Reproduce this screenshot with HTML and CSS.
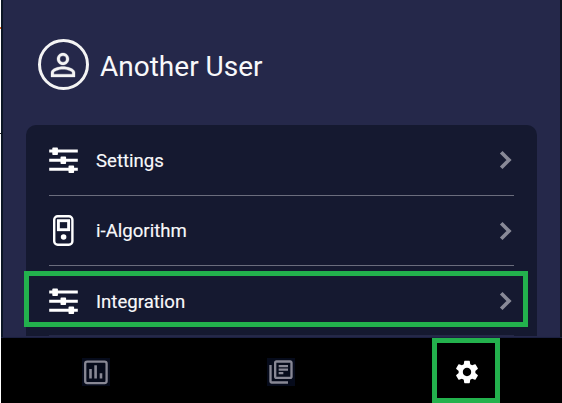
FILE: index.html
```html
<!DOCTYPE html>
<html lang="en">
<head>
<meta charset="utf-8">
<title>Settings</title>
<link rel="stylesheet" href="styles.css">
</head>
<body>
<div class="screen">
  <main class="content">
    <header class="profile">
      <span class="avatar">
        <svg width="36" height="36" viewBox="0 0 24 24" fill="#f4f4f4" stroke="#f4f4f4" stroke-width="0.2"><path d="M12 5.9a2.1 2.1 0 1 1 0 4.2 2.1 2.1 0 0 1 0-4.2m0 9c2.97 0 6.1 1.46 6.1 2.1v1.1H5.9V17c0-.64 3.13-2.1 6.1-2.1M12 4C9.79 4 8 5.79 8 8s1.79 4 4 4 4-1.79 4-4-1.79-4-4-4zm0 9c-2.67 0-8 1.34-8 4v3h16v-3c0-2.66-5.33-4-8-4z"/></svg>
      </span>
      <h1 class="name">Another User</h1>
    </header>
    <section class="card">
      <div class="row">
        <svg class="icon" width="30" height="32" viewBox="0 0 30 32"><path d="M0.2 7H28.8M0.2 16.2H28.8M0.2 25.3H28.8" stroke="#fff" stroke-width="3"/><path d="M4.1 4.2h4v6h-4zM12.3 13.2h4v6h-4zM20.3 22.3h4v6h-4z" fill="#fff" stroke="#fff" stroke-width="1.6" stroke-linejoin="round"/></svg>
        <span class="label">Settings</span>
        <svg class="chevron" width="14" height="22" viewBox="0 0 14 22"><path d="M2.2 3.2L10 11L2.2 18.8" fill="none" stroke="#888997" stroke-width="3.7"/></svg>
      </div>
      <div class="row">
        <svg class="icon" width="30" height="32" viewBox="0 0 30 32"><rect x="5.2" y="1.2" width="18.2" height="28.6" rx="3.5" fill="none" stroke="#fff" stroke-width="2.4"/><rect x="9.4" y="5.7" width="10.2" height="9" fill="none" stroke="#fff" stroke-width="2.9"/><circle cx="14.6" cy="22" r="2.8" fill="#fff"/></svg>
        <span class="label raised">i-Algorithm</span>
        <svg class="chevron" width="14" height="22" viewBox="0 0 14 22"><path d="M2.2 3.2L10 11L2.2 18.8" fill="none" stroke="#888997" stroke-width="3.7"/></svg>
      </div>
      <div class="row last">
        <svg class="icon" width="30" height="32" viewBox="0 0 30 32"><path d="M0.2 7H28.8M0.2 16.2H28.8M0.2 25.3H28.8" stroke="#fff" stroke-width="3"/><path d="M4.1 4.2h4v6h-4zM12.3 13.2h4v6h-4zM20.3 22.3h4v6h-4z" fill="#fff" stroke="#fff" stroke-width="1.6" stroke-linejoin="round"/></svg>
        <span class="label">Integration</span>
        <svg class="chevron" width="14" height="22" viewBox="0 0 14 22"><path d="M2.2 3.2L10 11L2.2 18.8" fill="none" stroke="#888997" stroke-width="3.7"/></svg>
        <span class="highlight"></span>
      </div>
    </section>
  </main>
  <nav class="tabs">
    <span class="tab"><svg class="tile" width="28" height="28" viewBox="0 0 28 28"><rect x="3.2" y="3.7" width="21.4" height="21.4" rx="2" fill="none" stroke="#888895" stroke-width="2.3"/><path d="M8.5 11v9.5M13.6 7.3v13.2M19 15.3v5.2" stroke="#888895" stroke-width="2.6"/></svg></span>
    <span class="tab"><svg class="tile" width="28" height="28" viewBox="0 0 24 24" fill="#888895"><path d="M4 6H2v14c0 1.1.9 2 2 2h14v-2H4V6zm16-4H8c-1.1 0-2 .9-2 2v12c0 1.1.9 2 2 2h12c1.1 0 2-.9 2-2V4c0-1.1-.9-2-2-2zm0 14H8V4h12v12zM10 9h8v2h-8zm0 3h4v2h-4zm0-6h8v2h-8z"/></svg></span>
    <span class="tab active"><svg width="28" height="28" viewBox="0 0 24 24" fill="#fff"><path d="M19.14 12.94c.04-.3.06-.61.06-.94 0-.32-.02-.64-.07-.94l2.03-1.58c.18-.14.23-.41.12-.61l-1.92-3.32c-.12-.22-.37-.29-.59-.22l-2.39.96c-.5-.38-1.03-.7-1.62-.94l-.36-2.54c-.04-.24-.24-.41-.48-.41h-3.84c-.24 0-.43.17-.47.41l-.36 2.54c-.59.24-1.13.57-1.62.94l-2.39-.96c-.22-.08-.47 0-.59.22L2.74 8.87c-.12.21-.08.47.12.61l2.03 1.58c-.05.3-.09.63-.09.94s.02.64.07.94l-2.03 1.58c-.18.14-.23.41-.12.61l1.92 3.32c.12.22.37.29.59.22l2.39-.96c.5.38 1.03.7 1.62.94l.36 2.54c.05.24.24.41.48.41h3.84c.24 0 .44-.17.47-.41l.36-2.54c.59-.24 1.13-.56 1.62-.94l2.39.96c.22.08.47 0 .59-.22l1.92-3.32c.12-.22.07-.47-.12-.61l-2.01-1.58zM12 15.6c-1.98 0-3.6-1.62-3.6-3.6s1.62-3.6 3.6-3.6 3.6 1.62 3.6 3.6-1.62 3.6-3.6 3.6z"/></svg></span>
  </nav>
</div>
<span class="edge-mark orange"></span>
<span class="edge-mark dark"></span>
</body>
</html>
```
FILE: styles.css
```css
* { box-sizing: border-box; }
body {
  position: relative;
  margin: 0;
  background: #fff;
  font-family: Roboto, sans-serif;
  color: #f8f8fa;
}
.screen {
  width: 562px;
  height: 403px;
  overflow: hidden;
  border-left: 1px solid #fff;
  display: flex;
  flex-direction: column;
}
.content {
  height: 337px;
  flex: none;
  padding: 39px 23px 0;
  background: #25284a;
  border-left: 2px solid #0b1525;
  border-right: 2px solid #10131f;
}
.profile {
  display: flex;
  align-items: flex-start;
  height: 52px;
  padding-left: 12px;
  gap: 11px;
}
.avatar {
  width: 51px;
  height: 51px;
  border: 3px solid #f4f4f4;
  border-radius: 50%;
  display: flex;
  align-items: center;
  justify-content: center;
}
.avatar svg { margin-right: 1px; }
.name {
  margin: 11px 0 0;
  font-size: 28px;
  font-weight: 400;
  line-height: 34px;
  white-space: nowrap;
}
.card {
  width: 511px;
  height: 211px;
  margin-top: 34px;
  padding: 0 23px;
  background: #151930;
  border-radius: 10px 10px 0 0;
}
.row {
  position: relative;
  display: flex;
  align-items: center;
  height: 70px;
  border-bottom: 1px solid #6b6d7d;
}
.row:first-child { height: 71px; }
.row.last { border-bottom-color: #242846; }
.icon { flex: none; }
.label {
  flex: 1;
  margin-left: 17px;
  padding-top: 2px;
  font-size: 18.6px;
  line-height: 24px;
  -webkit-text-stroke: 0.15px #f8f8fa;
}
.label.raised { padding-top: 0; }
.chevron { flex: none; margin-right: 1px; }
.highlight {
  position: absolute;
  left: -25px;
  top: 5px;
  width: 504px;
  height: 56px;
  border: 5px solid #23b14d;
}
.tabs {
  flex: 1;
  display: grid;
  grid-template-columns: 1fr 1fr 1fr;
  padding: 0 3px 0 2px;
  background: #000;
  border-top: 1px solid #1b2040;
}
.tab {
  display: flex;
  align-items: center;
  justify-content: center;
  padding-top: 3px;
}
.tile { background: #060b1b; }
.active {
  justify-self: center;
  width: 68px;
  padding-left: 2px;
  border: 5px solid #23b14d;
}
.edge-mark {
  position: absolute;
  left: 0;
  width: 1px;
}
.orange { top: 27px; height: 2px; background: #e3651d; }
.dark { top: 133px; height: 1px; background: #222; }
```
